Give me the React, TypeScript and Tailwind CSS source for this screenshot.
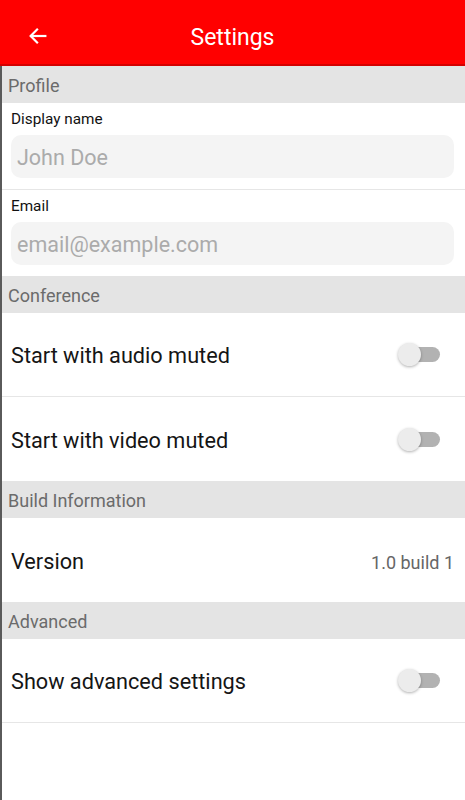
import React, { useState } from 'react';

function SectionHeader({ title }: { title: string }) {
    return (
        <div className="h-[37px] bg-[#e4e4e4] flex items-center px-[6px] pt-[2px] text-[18px] text-[#6b6b6b]">
            {title}
        </div>
    );
}

function Field({ label, placeholder, divider }: { label: string; placeholder: string; divider?: boolean }) {
    return (
        <div className={`pt-[8px] pb-[11px] ${divider ? 'border-b border-[#e6e6e6]' : ''}`}>
            <div className="px-[9px] text-[15.3px] leading-[17px] text-[#111]">{label}</div>
            <div className="ml-[9px] mr-[11px] mt-[7px] h-[43px] rounded-[10px] bg-[#f4f4f4] flex items-center px-[6px] pt-[3px]">
                <input
                    className="w-full bg-transparent outline-none text-[21.5px] text-[#333] placeholder:text-[#ababab]"
                    placeholder={placeholder}
                />
            </div>
        </div>
    );
}

function Toggle() {
    const [on, setOn] = useState(false);
    return (
        <button
            type="button"
            onClick={() => setOn(v => !v)}
            className="relative w-[43px] h-[23px] mr-[24px] flex items-center"
            aria-pressed={on}
        >
            <span className={`absolute left-[6px] right-[1px] h-[15px] rounded-full ${on ? 'bg-[#f7a4a4]' : 'bg-[#b2b2b2]'}`} />
            <span
                className={`absolute top-0 w-[23px] h-[23px] rounded-full shadow-[0_1px_3px_rgba(0,0,0,0.3)] ${
                    on ? 'left-[20px] bg-[#ff0000]' : 'left-0 bg-[#ececec]'
                }`}
            />
        </button>
    );
}

function Row({ children, divider }: { children: React.ReactNode; divider?: boolean }) {
    return (
        <div className={`h-[84px] flex items-center justify-between pl-[9px] ${divider ? 'border-b border-[#e6e6e6]' : ''}`}>
            {children}
        </div>
    );
}

export default function App() {
    return (
        <div className="w-[465px] h-[800px] bg-white flex flex-col font-['Roboto','Liberation_Sans',sans-serif] overflow-hidden">
            <div className="h-[66px] shrink-0 bg-[#ff0000] border-b-2 border-[#d40000] flex items-center relative">
                <button type="button" className="absolute left-[27px] top-[25px] text-white" aria-label="Back">
                    <svg width="22" height="22" viewBox="0 0 24 24" fill="none" stroke="white" strokeWidth="2.4" strokeLinecap="square">
                        <path d="M20 12H4.5" />
                        <path d="M11 5l-7 7 7 7" />
                    </svg>
                </button>
                <div className="flex-1 text-center text-white text-[23px] pt-[12px]">Settings</div>
            </div>

            <div className="flex-1 border-l-2 border-[#5a5a5a] flex flex-col">
                <SectionHeader title="Profile" />
                <Field label="Display name" placeholder="John Doe" divider />
                <Field label="Email" placeholder="email@example.com" />

                <SectionHeader title="Conference" />
                <Row divider>
                    <span className="text-[21.7px] text-[#151515] pt-[4px]">Start with audio muted</span>
                    <Toggle />
                </Row>
                <Row>
                    <span className="text-[21.7px] text-[#151515] pt-[4px]">Start with video muted</span>
                    <Toggle />
                </Row>

                <SectionHeader title="Build Information" />
                <Row>
                    <span className="text-[21.7px] text-[#151515] pt-[4px]">Version</span>
                    <span className="text-[18px] text-[#666] pr-[11px] pt-[4px]">1.0 build 1</span>
                </Row>

                <SectionHeader title="Advanced" />
                <Row divider>
                    <span className="text-[21.7px] text-[#151515] pt-[4px]">Show advanced settings</span>
                    <Toggle />
                </Row>
            </div>
        </div>
    );
}
